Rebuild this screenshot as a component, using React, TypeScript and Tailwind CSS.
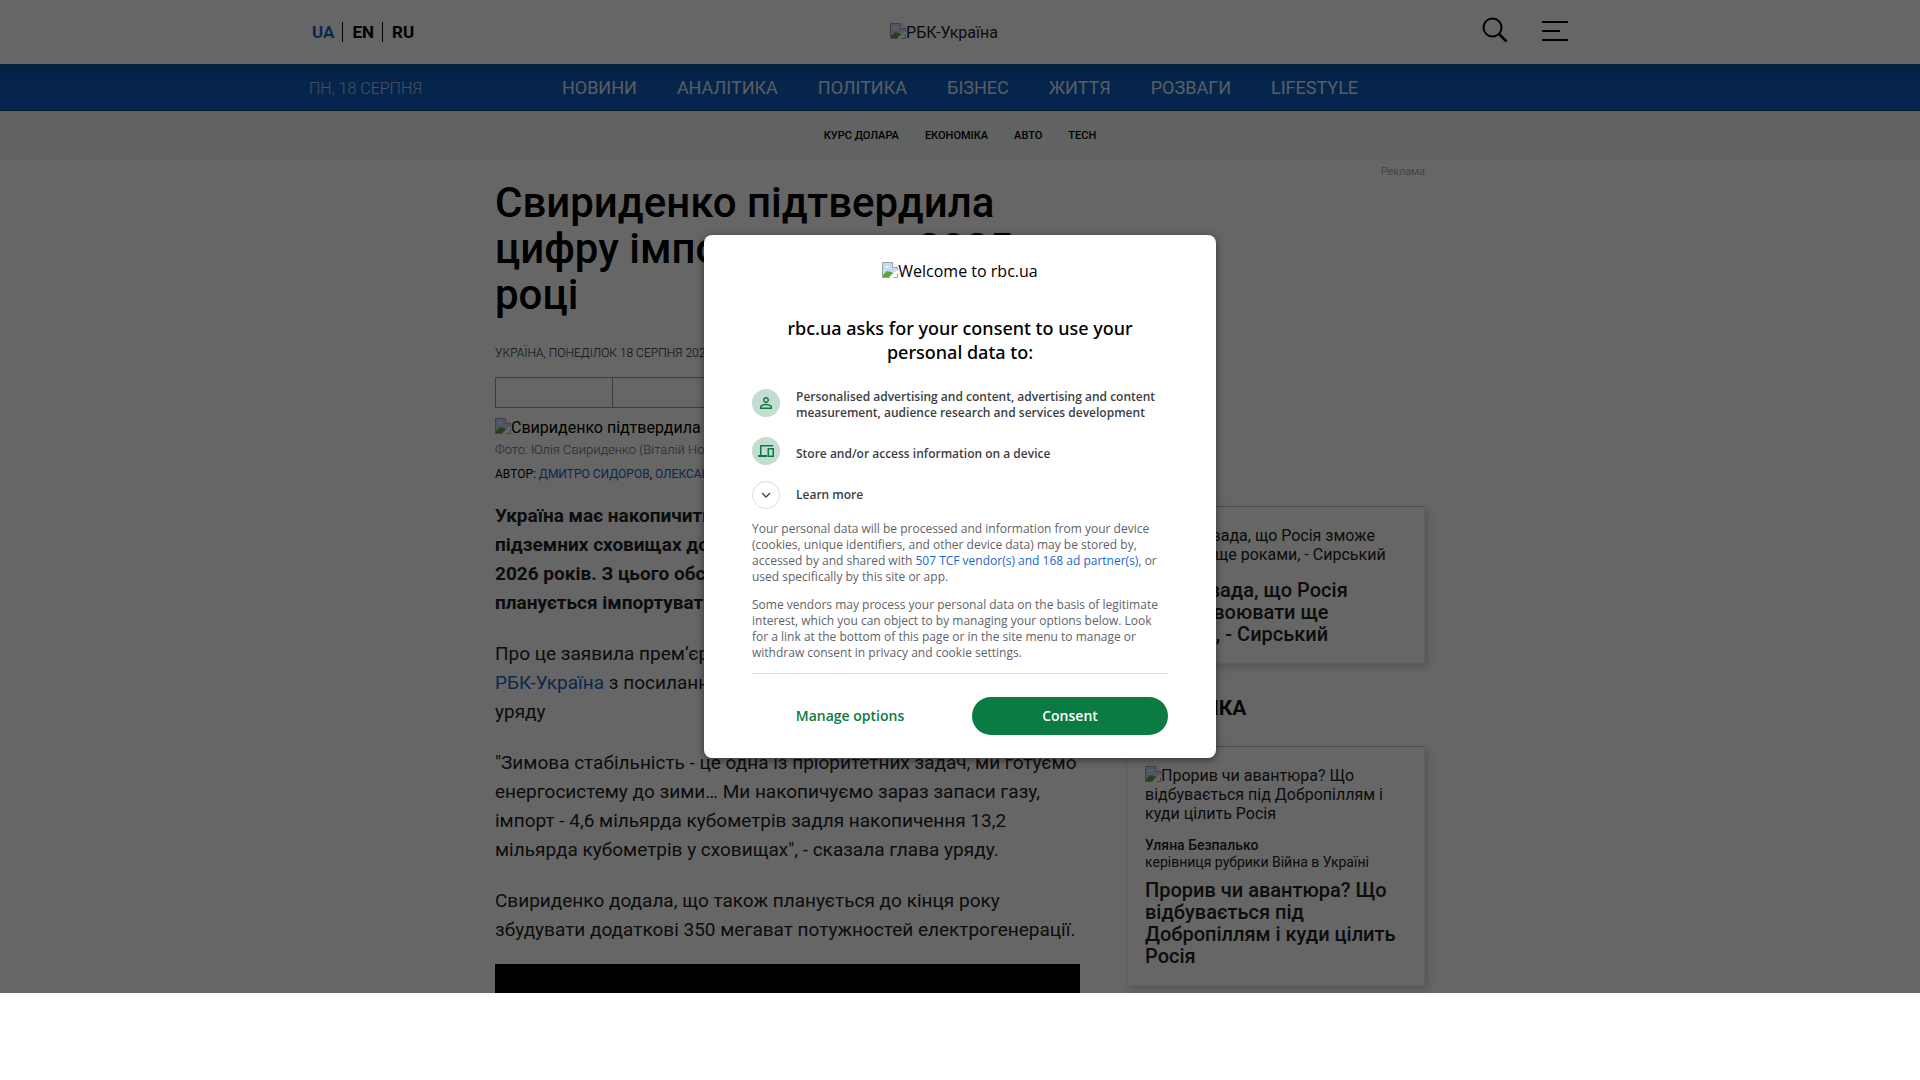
import type { ReactNode } from 'react'
import { MdPersonOutline } from 'react-icons/md'

const languages = [
  { code: 'UA', style: 'text-[#1e62c8]' },
  { code: 'EN', style: 'border-l border-black text-black' },
  { code: 'RU', style: 'border-l border-black text-black' },
]

const sections = ['НОВИНИ', 'АНАЛІТИКА', 'ПОЛІТИКА', 'БІЗНЕС', 'ЖИТТЯ', 'РОЗВАГИ', 'LIFESTYLE']
const topics = ['КУРС ДОЛАРА', 'ЕКОНОМІКА', 'АВТО', 'TECH']

function MissingImage({ alt }: { alt: string }) {
  return (
    <span role="img" aria-label={alt}>
      <svg className="inline-block size-4 align-[-1px]" viewBox="0 0 16 16" aria-hidden="true">
        <path d="M.5.5h10l5 5v10H.5z" fill="#fff" stroke="#a3a3a3" />
        <path d="M1 1h9v5h5v2l-7 7H1z" fill="#c3d9f7" />
        <path d="M1 15v-2l4-4 4 1 2 1-4 4z" fill="#5aa637" />
        <path d="M3 5.500c0-1 1-1.500 2-1 .5-1 2-.5 2 1z" fill="#fff" />
        <path d="M7 16l9-8v3l-5 5z" fill="#fff" />
        <path d="M10.500.500v5h5" fill="#fff" stroke="#a3a3a3" />
      </svg>
      {alt}
    </span>
  )
}

function Header() {
  return (
    <header>
      <div className="mx-auto grid h-16 max-w-[1302px] grid-cols-[1fr_auto_1fr] items-center pr-8">
        <div className="flex text-[17px] leading-5 font-bold">
          {languages.map((l) => (
            <a key={l.code} href="#" className={`pr-2 pl-[9px] first:pl-[3px] ${l.style}`}>
              {l.code}
            </a>
          ))}
        </div>
        <a href="#" className="pt-0.5 text-[16px] text-[#222]">
          <MissingImage alt="РБК-Україна" />
        </a>
        <div className="flex items-center justify-end gap-[34px] pr-[11px]">
          <button aria-label="Пошук" className="pb-1">
            <svg width="26" height="26" viewBox="0 0 26 26" fill="none" stroke="#000" strokeWidth="2">
              <circle cx="10.500" cy="10.500" r="9" />
              <path d="M17 17l7.500 7.500" strokeWidth="2.500" />
            </svg>
          </button>
          <button aria-label="Меню">
            <svg width="26" height="22" viewBox="0 0 26 22" stroke="#000" strokeWidth="2">
              <path d="M0 1h26M0 10h18M0 19h26" />
            </svg>
          </button>
        </div>
      </div>

      <div className="border-b border-[#0d4476] bg-linear-to-b from-[#0b4f96] to-[#0e5cbe] to-40%">
        <div className="mx-auto grid h-[46px] max-w-[1302px] grid-cols-[1fr_auto_1fr] items-center pt-px">
          <time className="pt-0.5 text-[16px] font-light text-[#b4cde6]">ПН, 18 СЕРПНЯ</time>
          <nav className="flex gap-10 text-[18px] text-[#dfe8f2]">
            {sections.map((s) => (
              <a key={s} href="#">{s}</a>
            ))}
          </nav>
        </div>
      </div>

      <nav className="flex h-[49px] items-center justify-center gap-[26px] bg-[#f0f7f4] pt-0.5 text-[11px] font-medium text-black">
        {topics.map((t) => (
          <a key={t} href="#">{t}</a>
        ))}
      </nav>
    </header>
  )
}

function Article() {
  return (
    <article className="min-w-0 flex-1">
      <h1 className="pt-5 text-[42px] leading-[46px] font-medium text-black">
        Свириденко підтвердила цифру імпорту газу у 2025 році
      </h1>
      <p className="mt-[25px] text-[12px] leading-5 font-light text-[#222]">УКРАЇНА, ПОНЕДІЛОК 18 СЕРПНЯ 2025 10:44</p>
      <div className="mt-[14px] grid h-[31px] grid-cols-5 divide-x divide-[#999] border border-[#999]">
        <span /><span /><span /><span /><span />
      </div>
      <p className="mt-2 truncate text-[16px] leading-6 text-black">
        <MissingImage alt="Свириденко підтвердила цифру імпорту газу у 2025 році" />
      </p>
      <p className="text-[13px] leading-5 font-light text-[#666]">Фото: Юлія Свириденко (Віталій Носач, РБК-Україна)</p>
      <p className="mt-1 text-[12px] leading-5 text-black">
        АВТОР: <a href="#" className="text-[#1e5fbf]">ДМИТРО СИДОРОВ</a>, <a href="#" className="text-[#1e5fbf]">ОЛЕКСАНДР БІЛОУС</a>
      </p>

      <div className="mt-[17px] space-y-[22px] text-[19px] leading-[29px] text-[#222]">
        <p className="font-bold">
          Україна має накопичити 13,2 мільярда кубометрів газу у підземних сховищах до опалювального сезону 2025 -
          2026{'\u00a0'}років. З цього обсягу 4,6 мільярда кубометрів газу планується імпортувати.
        </p>
        <p>
          Про це заявила прем’єр-міністр Юлія Свириденко, передає{' '}
          <a href="#" className="whitespace-nowrap text-[#1e5fbf]">РБК-Україна</a> з посиланням на онлайн-трансляцію
          виступу глави уряду
        </p>
        <p>
          "Зимова стабільність - це одна із пріоритетних задач, ми готуємо енергосистему до зими… Ми накопичуємо зараз
          запаси газу, імпорт - 4,6 мільярда кубометрів задля накопичення 13,2 мільярда кубометрів у сховищах", -
          сказала глава уряду.
        </p>
        <p>
          Свириденко додала, що також планується до кінця року збудувати додаткові 350 мегават потужностей
          електрогенерації.
        </p>
      </div>
      <div className="mt-5 aspect-video bg-black" />
    </article>
  )
}

function Card({ children }: { children: ReactNode }) {
  return (
    <div className="border border-[#eee] border-t-[#bbb] px-[17px] pt-[19px] pb-[18px] text-[#222] shadow-[3px_3px_8px_rgba(0,0,0,0.2)]">
      {children}
    </div>
  )
}

function Sidebar() {
  return (
    <aside className="w-[298px] shrink-0">
      <div className="h-[346px] text-right text-[11px] leading-6 font-light text-[#888]">Реклама</div>
      <Card>
        <p className="text-[16px] leading-[19px]">
          <MissingImage alt="Це бравада, що Росія зможе воювати ще роками, - Сирський" />
        </p>
        <h3 className="mt-[15px] text-[20px] leading-[22px] font-medium">
          <a href="#">Це бравада, що Росія зможе воювати ще роками, - Сирський</a>
        </h3>
      </Card>
      <h2 className="mt-[31px] mb-[25px] text-[21px] leading-[26px] font-bold text-[#111]">АНАЛІТИКА</h2>
      <Card>
        <p className="text-[16px] leading-[19px]">
          <MissingImage alt="Прорив чи авантюра? Що відбувається під Добропіллям і куди цілить Росія" />
        </p>
        <p className="mt-[14px] text-[14px] leading-[17px]">
          <span className="block font-medium">Уляна Безпалько</span>
          керівниця рубрики Війна в Україні
        </p>
        <h3 className="mt-2 text-[20px] leading-[22px] font-medium">
          <a href="#">Прорив чи авантюра? Що відбувається під Добропіллям і куди цілить Росія</a>
        </h3>
      </Card>
    </aside>
  )
}

function ConsentDialog() {
  return (
    <div
      role="dialog"
      aria-labelledby="consent-title"
      className="w-full max-w-[512px] rounded-lg bg-white px-12 pt-6 pb-[23px] font-['Open_Sans',sans-serif] shadow-[0_2px_8px_rgba(0,0,0,0.5)]"
    >
      <p className="text-center text-[16px] leading-6 text-black">
        <MissingImage alt="Welcome to rbc.ua" />
      </p>
      <h2
        id="consent-title"
        className="mx-auto mt-[33px] max-w-[352px] text-center font-['Noto_Sans',sans-serif] text-[18px] leading-6 font-medium text-black"
      >
        rbc.ua asks for your consent to use your personal data to:
      </h2>
      <ul className="mt-[25px] text-[12px] leading-4 font-semibold text-[#3c4043]">
        <li className="flex items-start gap-4">
          <span className="flex size-7 shrink-0 items-center justify-center rounded-full bg-[#c4ddd0] text-[#0b7a43]">
            <MdPersonOutline size={18} />
          </span>
          Personalised advertising and content, advertising and content measurement, audience research and services
          development
        </li>
        <li className="mt-4 flex items-center gap-4">
          <span className="flex size-7 shrink-0 items-center justify-center rounded-full bg-[#c4ddd0] text-[#0b7a43]">
            <svg width="16" height="12" viewBox="0 0 16 12" fill="none" stroke="currentColor" strokeWidth="1.500">
              <path d="M15 .75H2.750V10" />
              <path d="M0 11h9" strokeWidth="2" />
              <path d="M10.250 3.750h5v7.500h-5z" />
            </svg>
          </span>
          <span className="pt-1.5">Store and/or access information on a device</span>
        </li>
        <li className="mt-4">
          <button className="flex items-center gap-4 font-semibold">
            <span className="flex size-7 items-center justify-center rounded-full border border-[#dadce0]">
              <svg width="10" height="10" viewBox="0 0 10 10" fill="none" stroke="#3c4043" strokeWidth="1.300">
                <path d="M1 3l4 4 4-4" />
              </svg>
            </span>
            Learn more
          </button>
        </li>
      </ul>
      <div className="mt-3 space-y-3 border-b border-[#dadce0] pb-3 text-[12px] leading-4 text-[#5f6368]">
        <p>
          Your personal data will be processed and information from your device (cookies, unique identifiers, and other
          device data) may be stored by, accessed by and shared with{' '}
          <a href="#" className="text-[#1967d2]">507 TCF vendor(s) and 168 ad partner(s)</a>, or used specifically by
          this site or app.
        </p>
        <p>
          Some vendors may process your personal data on the basis of legitimate interest, which you can object to by
          managing your options below. Look for a link at the bottom of this page or in the site menu to manage or
          withdraw consent in privacy and cookie settings.
        </p>
      </div>
      <div className="mt-[23px] grid grid-cols-2 gap-6 text-[14px] leading-[38px] font-semibold">
        <button className="rounded-full text-[#0b7a43]">Manage options</button>
        <button className="rounded-full bg-[#0b7a43] text-white">Consent</button>
      </div>
    </div>
  )
}

export default function App() {
  return (
    <div className="flex h-screen flex-col bg-white">
      <div className="relative min-h-0 flex-1 overflow-hidden font-[Roboto,sans-serif]">
        <Header />
        <main className="mx-auto flex max-w-[930px] gap-[47px]">
          <Article />
          <Sidebar />
        </main>
        <div className="absolute inset-0 flex items-center justify-center bg-black/60">
          <ConsentDialog />
        </div>
      </div>
      <div className="h-[87px] shrink-0" />
    </div>
  )
}
